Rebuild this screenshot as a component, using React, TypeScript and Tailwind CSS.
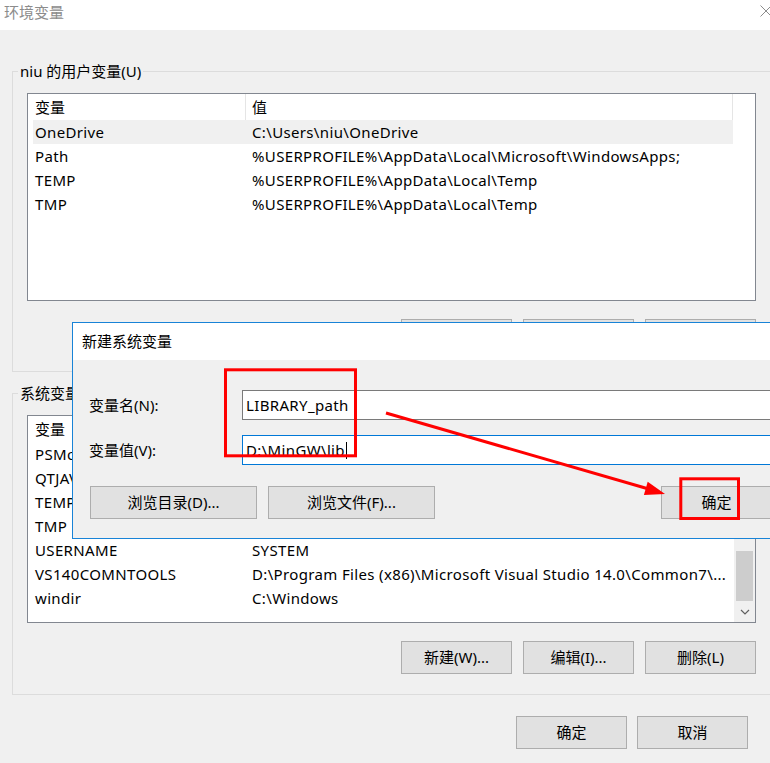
import React from "react";

type Row = { name: string; value: string };

const userVars: Row[] = [
  { name: "OneDrive", value: "C:\\Users\\niu\\OneDrive" },
  { name: "Path", value: "%USERPROFILE%\\AppData\\Local\\Microsoft\\WindowsApps;" },
  { name: "TEMP", value: "%USERPROFILE%\\AppData\\Local\\Temp" },
  { name: "TMP", value: "%USERPROFILE%\\AppData\\Local\\Temp" },
];

const systemVars: Row[] = [
  { name: "PSModulePath", value: "%ProgramFiles%\\WindowsPowerShell\\Modules;C:\\Windows\\system32\\..." },
  { name: "QTJAVA", value: "C:\\Program Files (x86)\\Java\\jre1.8.0_91\\lib\\ext\\QTJava.zip" },
  { name: "TEMP", value: "C:\\Windows\\TEMP" },
  { name: "TMP", value: "C:\\Windows\\TEMP" },
  { name: "USERNAME", value: "SYSTEM" },
  { name: "VS140COMNTOOLS", value: "D:\\Program Files (x86)\\Microsoft Visual Studio 14.0\\Common7\\..." },
  { name: "windir", value: "C:\\Windows" },
];

const WinButton = ({ label, wide }: { label: string; wide?: boolean }) => (
  <div
    className={`flex h-[33px] shrink-0 items-center justify-center border border-[#adadad] bg-[#e1e1e1] ${
      wide ? "w-[167px]" : "w-[111px]"
    }`}
  >
    {label}
  </div>
);

const Scrollbar = () => (
  <div className="flex w-[21px] shrink-0 flex-col bg-[#f0f0f0]">
    <div className="h-[21px]" />
    <div className="flex flex-1 flex-col justify-end px-[2px]">
      <div className="h-[50px] bg-[#cdcdcd]" />
    </div>
    <div className="flex h-[21px] items-center justify-center">
      <svg width="10" height="6" viewBox="0 0 10 6">
        <path d="M1 1 L5 5 L9 1" fill="none" stroke="#606060" strokeWidth="1.2" />
      </svg>
    </div>
  </div>
);

const VarList = ({ rows, selected, scroll }: { rows: Row[]; selected?: number; scroll?: boolean }) => (
  <div className="flex h-[208px] w-[729px] border border-[#828790] bg-white">
    <div className="min-w-0 flex-1 overflow-hidden">
      {/* header */}
      <div className="flex h-[26px]">
        <div className="w-[218px] shrink-0 border-r border-[#e5e5e5] pl-[7px] pt-px leading-[25px]">变量</div>
        <div className="w-[487px] shrink-0 border-r border-[#e5e5e5] pl-[6px] pt-px leading-[25px]">值</div>
      </div>
      {rows.map((row, i) => (
        <div
          key={row.name + i}
          className={`ml-[5px] flex h-[24px] w-[700px] whitespace-nowrap pt-px leading-[23px] tracking-[0.35px] ${
            i === selected ? "bg-[#f0f0f0]" : ""
          }`}
        >
          <div className="w-[213px] shrink-0 overflow-hidden pl-[2px]">{row.name}</div>
          <div className="min-w-0 flex-1 overflow-hidden pl-[6px]">{row.value}</div>
        </div>
      ))}
    </div>
    {scroll && <Scrollbar />}
  </div>
);

const GroupBox = ({
  title,
  children,
  className,
}: {
  title: string;
  children: React.ReactNode;
  className?: string;
}) => (
  <fieldset className={`ml-[12px] w-[780px] border border-[#dcdcdc] ${className ?? ""}`}>
    <legend className="ml-[5px] px-[2px] leading-[20px]">{title}</legend>
    {children}
  </fieldset>
);

export default function App() {
  return (
    <div className="relative h-[763px] w-[770px] overflow-hidden bg-[#f0f0f0] font-[family-name:'Noto_Sans','Noto_Sans_CJK_SC',sans-serif] text-[15px] text-black">
      {/* title bar */}
      <div className="flex h-[30px] justify-between bg-white">
        <div className="pl-[4px] pt-[2px] leading-[20px] text-[#8c8c8c]">环境变量</div>
        <svg className="-mr-[2px] mt-[5px]" width="12" height="12" viewBox="0 0 12 12">
          <path d="M0.5 0.5 L11.5 11.5 M11.5 0.5 L0.5 11.5" stroke="#8c8c8c" strokeWidth="1" />
        </svg>
      </div>

      <div className="pt-[31px]">
        <GroupBox title="niu 的用户变量(U)">
          <div className="pb-[19px] pl-[14px] pt-[12px]">
            <VarList rows={userVars} selected={0} />
            <div className="mt-[18px] flex w-[729px] justify-end gap-[11px]">
              <WinButton label="新建(N)..." />
              <WinButton label="编辑(E)..." />
              <WinButton label="删除(D)" />
            </div>
          </div>
        </GroupBox>

        <GroupBox title="系统变量(S)" className="mt-[11px]">
          <div className="pb-[20px] pl-[14px] pt-[12px]">
            <VarList rows={systemVars} scroll />
            <div className="mt-[18px] flex w-[729px] justify-end gap-[11px]">
              <WinButton label="新建(W)..." />
              <WinButton label="编辑(I)..." />
              <WinButton label="删除(L)" />
            </div>
          </div>
        </GroupBox>

        <div className="mt-[21px] flex justify-end gap-[10px] pr-[22px]">
          <WinButton label="确定" />
          <WinButton label="取消" />
        </div>
      </div>

      {/* 新建系统变量 dialog */}
      <div className="absolute left-[72px] top-[322px] h-[217px] w-[838px] border border-[#1883d7] bg-[#f0f0f0]">
        <div className="flex h-[37px] items-center bg-white pl-[9px]">新建系统变量</div>
        <div className="pl-[16px] pr-[15px] pt-[30px]">
          <div className="flex h-[30px] items-center">
            <div className="w-[153px] shrink-0">变量名(N):</div>
            <div className="h-[30px] flex-1 border border-[#7a7a7a] bg-white pl-[3px] leading-[28px] tracking-[0.35px]">
              LIBRARY_path
            </div>
          </div>
          <div className="mt-[15px] flex h-[30px] items-center">
            <div className="w-[153px] shrink-0">变量值(V):</div>
            <div className="flex h-[30px] flex-1 items-center border border-[#0078d7] bg-white pl-[3px]">
              <span className="leading-[28px] tracking-[0.35px]">{"D:\\MinGW\\lib"}</span>
              <span className="ml-[1px] inline-block h-[17px] w-px bg-black" />
            </div>
          </div>
          <div className="mt-[21px] flex justify-between pl-[1px]">
            <div className="flex gap-[11px]">
              <WinButton label="浏览目录(D)..." wide />
              <WinButton label="浏览文件(F)..." wide />
            </div>
            <div className="flex gap-[11px]">
              <WinButton label="确定" />
              <WinButton label="取消" />
            </div>
          </div>
        </div>
      </div>

      {/* red annotations */}
      <svg className="pointer-events-none absolute inset-0" width="770" height="763" viewBox="0 0 770 763">
        <rect x="225.5" y="369.8" width="130" height="86" fill="none" stroke="#ff0000" strokeWidth="3" />
        <rect x="680.8" y="478.8" width="57.7" height="39.7" fill="none" stroke="#ff0000" strokeWidth="3" />
        <line x1="386" y1="413" x2="647" y2="488.5" stroke="#ff0000" strokeWidth="3" />
        <polygon points="665,494 647.7,481.7 643.9,495.1" fill="#ff0000" />
      </svg>
    </div>
  );
}
